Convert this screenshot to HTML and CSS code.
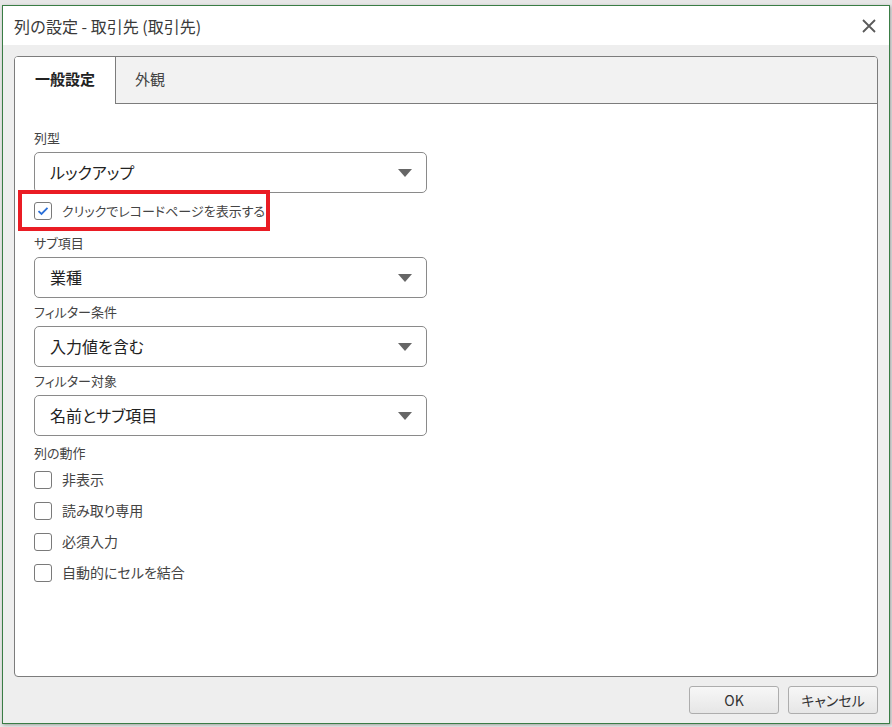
FILE: index.html
```html
<!DOCTYPE html>
<html lang="ja">
<head>
<meta charset="utf-8">
<link rel="stylesheet" href="styles.css">
</head>
<body>
<div class="dialog">
  <div class="titlebar">
    <span class="title">列の設定 - 取引先 (取引先)</span>
    <svg class="close" width="14" height="14" viewBox="0 0 14 14"><path d="M1 1L13 13M13 1L1 13" stroke="#5a5a5a" stroke-width="1.8" fill="none"/></svg>
  </div>
  <div class="body">
    <div class="tabs">
      <div class="tabbar">
        <div class="tab active">一般設定</div>
        <div class="tab">外観</div>
      </div>
      <div class="panel">
        <div class="field first">
          <div class="label">列型</div>
          <div class="select"><span>ルックアップ</span><i class="arrow"></i></div>
        </div>
        <div class="check-row highlight">
          <span class="box checked"><svg width="12" height="10" viewBox="0 0 12 10"><path d="M1.5 5.2L4.5 8L10.5 1.8" stroke="#2b6fd8" stroke-width="1.8" fill="none"/></svg></span>
          <span class="small">クリックでレコードページを表示する</span>
          <span class="redbox"></span>
        </div>
        <div class="field sub">
          <div class="label">サブ項目</div>
          <div class="select"><span>業種</span><i class="arrow"></i></div>
        </div>
        <div class="field">
          <div class="label">フィルター条件</div>
          <div class="select"><span>入力値を含む</span><i class="arrow"></i></div>
        </div>
        <div class="field">
          <div class="label">フィルター対象</div>
          <div class="select"><span>名前とサブ項目</span><i class="arrow"></i></div>
        </div>
        <div class="label actions">列の動作</div>
        <div class="check-list">
          <div class="check-row"><span class="box"></span><span>非表示</span></div>
          <div class="check-row"><span class="box"></span><span>読み取り専用</span></div>
          <div class="check-row"><span class="box"></span><span>必須入力</span></div>
          <div class="check-row"><span class="box"></span><span>自動的にセルを結合</span></div>
        </div>
      </div>
    </div>
    <div class="footer">
      <button class="btn">OK</button>
      <button class="btn">キャンセル</button>
    </div>
  </div>
</div>
</body>
</html>
```

FILE: styles.css
```css
html, body {
  margin: 0;
  padding: 0;
}
body {
  background: #e6e6e6;
  width: 892px;
  height: 727px;
  overflow: hidden;
  font-family: "Noto Sans CJK JP", "Noto Sans", sans-serif;
  font-feature-settings: "palt";
  color: #333;
}
.dialog {
  margin: 5px 0 0 2px;
  width: 888px;
  height: 719px;
  box-sizing: border-box;
  border: 1px solid #3a7d45;
  background: #eeeeee;
  box-shadow: 1px 1px 3px rgba(0,0,0,0.3);
  display: flex;
  flex-direction: column;
}
.titlebar {
  height: 39px;
  background: #ffffff;
  display: flex;
  align-items: center;
  justify-content: space-between;
  padding: 1px 13px 0 11px;
  box-sizing: border-box;
}
.title {
  font-size: 16px;
  line-height: 20px;
  color: #3a3a3a;
  font-feature-settings: normal;
}
.close {
  display: block;
}
.body {
  flex: 1;
  padding: 11px 11px 9px 11px;
  display: flex;
  flex-direction: column;
}
.tabs {
  height: 621px;
  box-sizing: border-box;
  border: 1px solid #7c7c7c;
  border-radius: 4px;
  background: #fff;
  display: flex;
  flex-direction: column;
  overflow: hidden;
}
.tabbar {
  height: 47px;
  box-sizing: border-box;
  background: #f2f2f2;
  border-bottom: 1px solid #7c7c7c;
  display: flex;
}
.tab {
  font-size: 15px;
  line-height: 20px;
  padding: 12px 20px 0 19px;
  color: #444;
}
.tab.active {
  background: #fff;
  font-weight: bold;
  color: #222;
  width: 101px;
  box-sizing: border-box;
  padding-left: 20px;
  border-right: 1px solid #7c7c7c;
  margin-bottom: -1px;
}
.panel {
  flex: 1;
  padding: 26px 0 0 19px;
}
.label {
  font-size: 13px;
  line-height: 16px;
  padding-bottom: 2px;
  color: #444;
}
.field {
  margin-top: 6px;
}
.field.first {
  margin-top: 0;
}
.field.sub {
  margin-top: 15px;
}
.select {
  margin-top: 4px;
  width: 393px;
  height: 41px;
  box-sizing: border-box;
  border: 1px solid #8a8a8a;
  border-radius: 5px;
  display: flex;
  align-items: center;
  justify-content: space-between;
  padding: 0 14px 2px 15px;
  font-size: 16px;
  color: #222;
}
.arrow {
  width: 0;
  height: 0;
  margin-top: 2px;
  border-left: 7.5px solid transparent;
  border-right: 7.5px solid transparent;
  border-top: 8px solid #666;
}
.check-row {
  position: relative;
  display: flex;
  align-items: center;
  height: 18px;
  font-size: 14px;
  color: #444;
}
.check-row > span:not(.box):not(.redbox) {
  position: relative;
  top: -1px;
}
.check-row.highlight {
  margin-top: 9px;
}
.box {
  width: 18px;
  height: 18px;
  box-sizing: border-box;
  border: 1px solid #7a7a7a;
  border-radius: 3px;
  background: #fff;
  margin-right: 10px;
  display: flex;
  align-items: center;
  justify-content: center;
  flex: none;
}
.small {
  font-size: 13px;
}
.redbox {
  position: absolute;
  left: -16px;
  top: -12px;
  width: 252px;
  height: 41px;
  box-sizing: border-box;
  border: 4px solid #ea1c24;
}
.label.actions {
  margin-top: 9px;
}
.check-list {
  margin-top: 8px;
  display: flex;
  flex-direction: column;
  gap: 13px;
}
.footer {
  margin-top: 9px;
  display: flex;
  justify-content: flex-end;
  gap: 9px;
}
.btn {
  width: 90px;
  height: 28px;
  box-sizing: border-box;
  border: 1px solid #adadad;
  border-radius: 3px;
  background: linear-gradient(#f7f7f7, #e6e6e6);
  font-family: "Noto Sans CJK JP", "Noto Sans", sans-serif;
  font-feature-settings: "palt";
  font-size: 14px;
  color: #333;
  padding: 0 0 1px 0;
  line-height: 20px;
  display: flex;
  align-items: center;
  justify-content: center;
  text-align: center;
}
```
